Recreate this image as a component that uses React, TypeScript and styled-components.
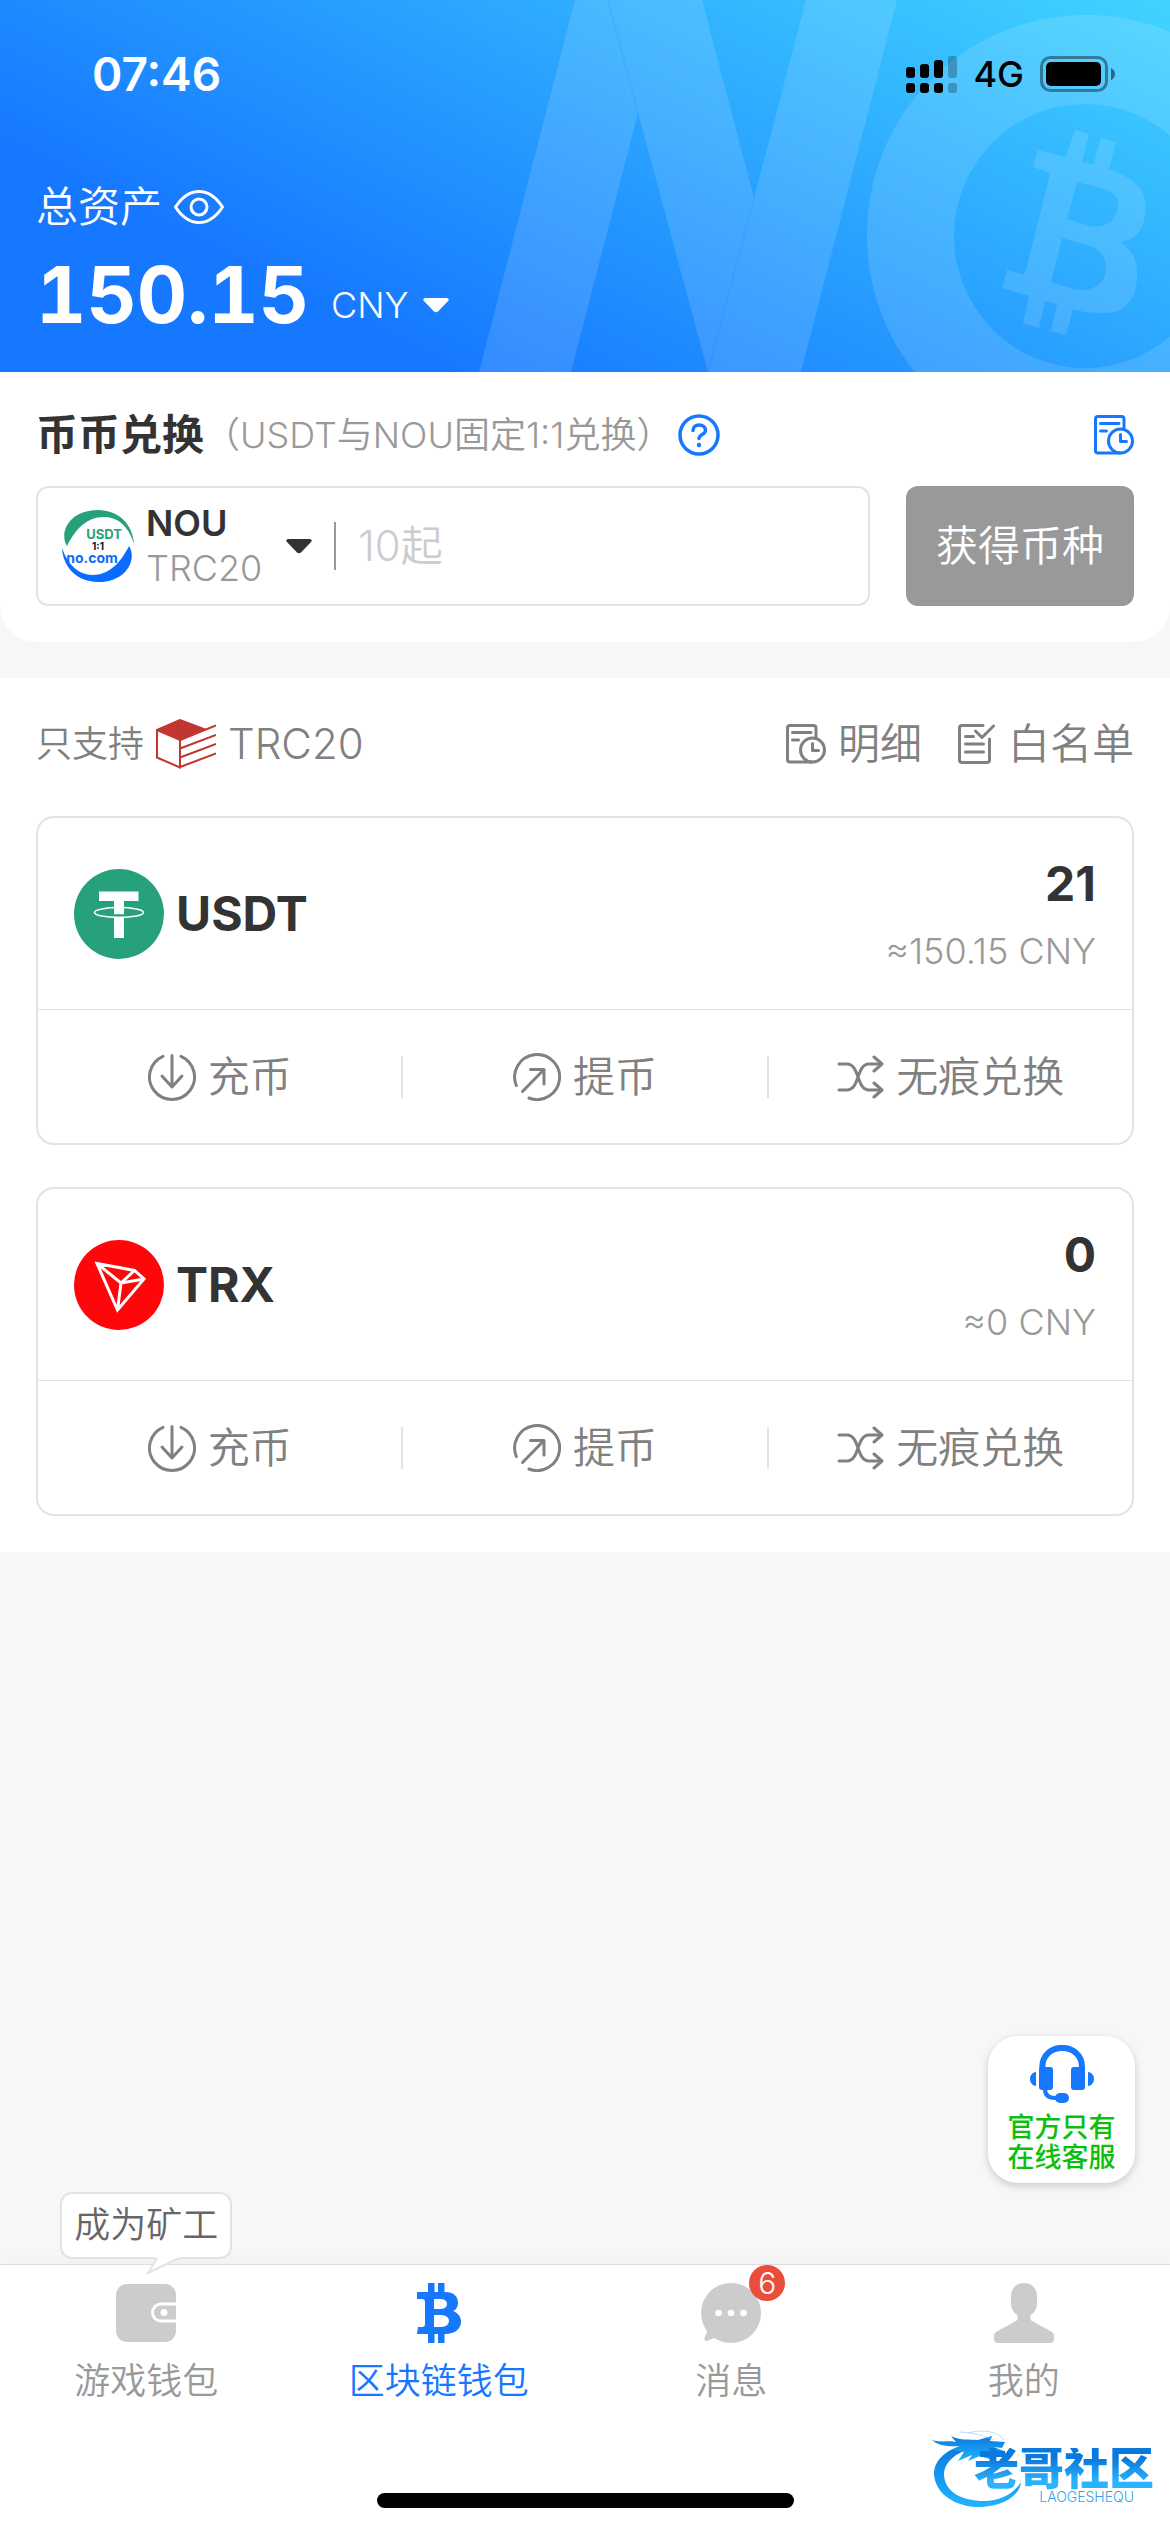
import React from "react";
import styled, { createGlobalStyle } from "styled-components";

const color = {
  primary: "#1677ff",
  ink: "#333333",
  text: "#808080",
  muted: "#999999",
  faint: "#cccccc",
  line: "#e3e3e3",
  page: "#f7f7f7",
};

const GlobalStyle = createGlobalStyle`
  * { box-sizing: border-box; }
  body {
    margin: 0;
    background: ${color.page};
    color: ${color.ink};
    font-family: Inter, "Noto Sans CJK SC", sans-serif;
    font-size: 42px;
    font-weight: 350;
    line-height: 60px;
  }
  button, input, select {
    margin: 0;
    padding: 0;
    border: 0;
    background: none;
    color: inherit;
    font: inherit;
  }
  h1, h2, p { margin: 0; font: inherit; }
  a { color: inherit; text-decoration: none; }
  svg { display: block; flex: none; }
`;

const Screen = styled.div`
  position: relative;
  display: flex;
  flex-direction: column;
  min-height: 100vh;
`;

/* ---------- header ---------- */

const Header = styled.header`
  position: relative;
  overflow: hidden;
  padding: 0 36px 27px;
  background: linear-gradient(27deg, #1677ff 23%, #40d4ff 100%);
  color: #fff;
`;

const HeaderArt = styled.svg`
  position: absolute;
  top: 0;
  right: 0;
`;

const HeaderBody = styled.div`
  position: relative;
`;

const StatusBar = styled.div`
  display: flex;
  align-items: center;
  justify-content: space-between;
  height: 148px;
  padding: 0 18px 0 56px;
`;

const Clock = styled.time`
  font-size: 46px;
  font-weight: 600;
`;

const StatusIcons = styled.div`
  display: flex;
  align-items: center;
  gap: 16px;
  color: #000;
  font-size: 36px;
  font-weight: 500;
`;

const AssetLabel = styled.div`
  display: flex;
  align-items: center;
  gap: 12px;
  margin-top: 29px;
`;

const IconButton = styled.button`
  display: flex;
  color: ${(p) => p.color ?? "inherit"};
`;

const AssetTotal = styled.div`
  display: flex;
  align-items: flex-end;
  gap: 22px;
  margin-top: 8px;
`;

const Amount = styled.h1`
  font-size: 78px;
  font-weight: 700;
  font-variant-numeric: tabular-nums;
  line-height: 100px;
`;

const CurrencyPicker = styled.label`
  display: flex;
  align-items: center;
  gap: 14px;
  padding-bottom: 16px;
  font-size: 36px;
  line-height: 48px;
`;

const CurrencySelect = styled.select`
  appearance: none;
`;

/* ---------- exchange ---------- */

const ExchangePanel = styled.section`
  padding: 36px;
  border-radius: 0 0 36px 36px;
  background: #fff;
`;

const Row = styled.div`
  display: flex;
  align-items: center;
`;

const ExchangeHead = styled(Row)`
  margin-bottom: 24px;
  line-height: 54px;
  height: 54px;
`;

const Title = styled.h2`
  font-weight: 700;
`;

const Note = styled.span`
  flex: 1;
  display: flex;
  align-items: center;
  gap: 6px;
  color: ${color.muted};
  font-size: 36px;
`;

const ExchangeForm = styled.form`
  display: flex;
  gap: 36px;
`;

const CoinField = styled.div`
  display: flex;
  align-items: center;
  flex: 1;
  min-width: 0;
  height: 120px;
  padding: 0 24px;
  border: 2px solid ${color.line};
  border-radius: 12px;
`;

const CoinPicker = styled.button`
  display: flex;
  align-items: center;
  gap: 12px;
  padding-right: 22px;
  text-align: left;
`;

const CoinNames = styled.span`
  display: flex;
  flex-direction: column;
  margin-right: 12px;
  color: ${color.muted};
  font-size: 36px;
  line-height: 45px;
`;

const CoinSymbol = styled.strong`
  color: ${color.ink};
  font-weight: 600;
`;

const AmountInput = styled.input`
  flex: 1;
  min-width: 0;
  height: 60px;
  padding-left: 22px;
  outline: 0;
  &::placeholder {
    color: ${color.faint};
    opacity: 1;
  }
`;

const Divider = styled.span<{ $tone: string; $height: number }>`
  flex: none;
  width: 2px;
  height: ${(p) => p.$height}px;
  background: ${(p) => p.$tone};
`;

const SubmitButton = styled.button`
  padding: 0 30px;
  border-radius: 12px;
  background: ${color.muted};
  color: #fff;
`;

/* ---------- assets ---------- */

const AssetPanel = styled.section`
  margin-top: 36px;
  padding: 36px;
  background: #fff;
`;

const AssetHead = styled(Row)`
  justify-content: space-between;
  margin-bottom: 42px;
  color: ${color.text};
`;

const Network = styled(Row)`
  gap: 12px;
`;

const SmallText = styled.span`
  font-size: 36px;
`;

const AssetLinks = styled.nav`
  display: flex;
  gap: 36px;
`;

const IconLink = styled.a`
  display: flex;
  align-items: center;
  gap: 12px;
`;

const CardList = styled.div`
  display: grid;
  gap: 42px;
`;

const Card = styled.article`
  border: 2px solid ${color.line};
  border-radius: 18px;
`;

const CardTop = styled(Row)`
  gap: 12px;
  height: 192px;
  padding: 0 36px;
  border-bottom: 1px solid ${color.line};
`;

const CardName = styled.h2`
  flex: 1;
  font-size: 48px;
  font-weight: 700;
`;

const Balance = styled.div`
  display: flex;
  flex-direction: column;
  gap: 12px;
  padding-top: 6px;
  text-align: right;
`;

const BalanceValue = styled.strong`
  font-size: 48px;
  font-weight: 700;
  line-height: 57px;
`;

const BalanceFiat = styled.span`
  color: ${color.muted};
  font-size: 36px;
  line-height: 54px;
`;

const Actions = styled.div`
  display: flex;
  align-items: center;
  height: 133px;
`;

const ActionButton = styled.button`
  display: flex;
  flex: 1 0 0;
  align-items: center;
  justify-content: center;
  gap: 12px;
  color: ${color.text};
`;

/* ---------- bottom ---------- */

const Service = styled.a`
  position: absolute;
  right: 35px;
  bottom: 349px;
  display: flex;
  flex-direction: column;
  align-items: center;
  gap: 10px;
  width: 147px;
  height: 147px;
  padding-top: 9px;
  border-radius: 30px;
  background: #fff;
  box-shadow: 0 3px 9px rgba(0, 0, 0, 0.18);
  color: ${color.primary};
  font-size: 27px;
  font-weight: 500;
  line-height: 30px;
  text-align: center;
`;

const ServiceText = styled.span`
  color: #0bbf0b;
`;

const Footer = styled.footer`
  position: relative;
  margin-top: auto;
  padding-bottom: 24px;
  border-top: 1px solid #dcdcdc;
  background: #fff;
  box-shadow: 0 -3px 18px rgba(0, 0, 0, 0.03);
`;

const TabBar = styled.nav`
  display: flex;
  padding-top: 18px;
`;

const Tab = styled.a<{ $active?: boolean }>`
  position: relative;
  display: flex;
  flex: 1 0 0;
  flex-direction: column;
  align-items: center;
  gap: 14px;
  color: ${(p) => (p.$active ? color.primary : color.muted)};
  font-size: 36px;
  line-height: 48px;
`;

const TabIcon = styled.span`
  position: relative;
  color: ${color.faint};
  ${Tab}[aria-current] & { color: ${color.primary}; }
`;

const Badge = styled.span`
  position: absolute;
  top: -18px;
  right: -24px;
  min-width: 36px;
  border-radius: 18px;
  background: #eb4d3d;
  color: #fff;
  font-size: 30px;
  line-height: 36px;
  text-align: center;
`;

const Bubble = styled.span`
  position: absolute;
  bottom: 146px;
  padding: 6px 12px;
  border: 2px solid ${color.line};
  border-radius: 12px;
  background: #fff;
  color: #666;
  line-height: 51px;
  white-space: nowrap;
`;

const BubbleTail = styled.svg`
  position: absolute;
  top: 100%;
  left: 50%;
  margin-top: -2px;
`;

const HomeIndicator = styled.div`
  width: 417px;
  max-width: 36%;
  height: 15px;
  margin: 88px auto 0;
  border-radius: 8px;
  background: #000;
`;

const Watermark = styled.div`
  position: absolute;
  right: 16px;
  bottom: 24px;
  width: 222px;
  height: 80px;
`;

const WatermarkArt = styled.svg`
  position: absolute;
  inset: 0;
`;

const WatermarkText = styled.div`
  position: relative;
  display: flex;
  flex-direction: column;
  align-items: flex-end;
  padding-top: 20px;
`;

const WatermarkName = styled.span`
  background: linear-gradient(#0a78dc 25%, #2ab4ff 80%);
  background-clip: text;
  -webkit-background-clip: text;
  color: transparent;
  font-size: 45px;
  font-weight: 900;
  line-height: 42px;
`;

const WatermarkLatin = styled.span`
  padding-right: 20px;
  color: #3aa0e8;
  font-size: 14px;
  line-height: 14px;
`;

/* ---------- icons ---------- */

const stroke = {
  fill: "none",
  stroke: "currentColor",
  strokeWidth: 3,
  strokeLinecap: "round" as const,
  strokeLinejoin: "round" as const,
};

const Caret = () => (
  <svg width="26" height="15" viewBox="0 0 26 15" fill="currentColor">
    <path d="M2 0H24Q27 1 25 3L15 13.500Q13 15 11 13.500L1 3Q-1 1 2 0Z" />
  </svg>
);

const EyeIcon = () => (
  <svg width="50" height="34" viewBox="0 0 50 34" {...stroke}>
    <path d="M1.500 17C8 7 16 1.500 25 1.500S42 7 48.500 17C42 27 34 32.500 25 32.500S8 27 1.500 17Z" />
    <circle cx="25" cy="17" r="8" />
  </svg>
);

const SignalIcon = () => (
  <svg width="51" height="37" viewBox="0 0 51 37">
    <rect x="0" y="11" width="9" height="11" rx="3" />
    <rect x="14" y="8" width="9" height="14" rx="3" />
    <rect x="28" y="4" width="9" height="18" rx="3" />
    <rect x="42" y="0" width="9" height="22" rx="3" opacity=".25" />
    <rect x="0" y="27" width="9" height="10" rx="3" />
    <rect x="14" y="27" width="9" height="10" rx="3" />
    <rect x="28" y="27" width="9" height="10" rx="3" />
    <rect x="42" y="27" width="9" height="10" rx="3" opacity=".25" />
  </svg>
);

const BatteryIcon = () => (
  <svg width="76" height="36" viewBox="0 0 76 36">
    <rect x="1.500" y="1.500" width="65" height="33" rx="9" fill="none" stroke="#000" strokeWidth="3" opacity=".4" />
    <rect x="6" y="6" width="55" height="24" rx="5" />
    <path d="M71 12Q75 14 75 18T71 24Z" opacity=".5" />
  </svg>
);

const HelpIcon = () => (
  <svg width="42" height="42" viewBox="0 0 42 42" {...stroke} strokeWidth="3.500">
    <circle cx="21" cy="21" r="19" />
    <path d="M15 16.500C15 13 18 11 21 11C25 11 27.500 13.500 27.500 16.500C27.500 20.500 21 20.500 21 24.500" strokeWidth="3.500" />
    <circle cx="21" cy="31" r="2.200" fill="currentColor" stroke="none" />
  </svg>
);

const RecordIcon = () => (
  <svg width="40" height="40" viewBox="0 0 40 40" {...stroke}>
    <path d="M30 13V4Q30 1.500 27.500 1.500H4Q1.500 1.500 1.500 4V35.500Q1.500 38 4 38H26" />
    <path d="M6.500 8.500H25M6.500 16H12.500" />
    <circle cx="26.500" cy="26" r="12" />
    <path d="M26.500 19.500V26.500H32.500" />
  </svg>
);

const WhitelistIcon = () => (
  <svg width="38" height="40" viewBox="0 0 38 40" {...stroke}>
    <path d="M25 1.500H4Q1.500 1.500 1.500 4V36Q1.500 38.500 4 38.500H29Q31.500 38.500 31.500 36V15" />
    <path d="M17.500 7L24 13.500L35.500 2M7.500 12.500H15.500M7.500 20H25.500M7.500 28H25.500" />
  </svg>
);

const DepositIcon = () => (
  <svg width="48" height="48" viewBox="0 0 48 48" {...stroke}>
    <path d="M15 3.300A22.500 22.500 0 1 0 33 3.300" />
    <path d="M24 2.500V34M14 23L24 34L34 23" />
  </svg>
);

const WithdrawIcon = () => (
  <svg width="48" height="48" viewBox="0 0 48 48" {...stroke}>
    <path d="M3.300 32.500A22.500 22.500 0 1 1 16 45" />
    <path d="M9.500 38.500L31 16.500M17.500 16.500H31V31" />
  </svg>
);

const ShuffleIcon = () => (
  <svg width="48" height="44" viewBox="0 0 48 44" {...stroke}>
    <path d="M3 9H11C24 9 20 35 33 35H45M3 35H11C24 35 20 9 33 9H45" />
    <path d="M38 2L46 9L38 16M38 28L46 35L38 42" />
  </svg>
);

const NouLogo = () => (
  <svg width="72" height="72" viewBox="0 0 72 72" fontFamily="Inter, sans-serif" fontWeight="700" textAnchor="middle">
    <path d="M5 36C-3 24 6 0 36 0C56 0 71 14 72 34C66 14 54 7 42 7C24 7 13 20 5 36Z" fill="#26a17b" />
    <path d="M67 36C75 48 66 72 36 72C16 72 1 58 0 38C6 56 18 65 30 65C48 65 59 52 67 36Z" fill="#0a6cff" />
    <text x="42" y="29" fontSize="13" fill="#26a17b">USDT</text>
    <text x="36" y="40" fontSize="10" fill="#111">1:1</text>
    <text x="30" y="53" fontSize="14" fill="#0a6cff">no.com</text>
  </svg>
);

const TronCube = () => (
  <svg width="60" height="50" viewBox="0 0 60 50" fill="none" stroke="#c23631" strokeWidth="2">
    <path d="M1 11L24 1L48 10L24 21Z" fill="#c23631" />
    <path d="M1 11V38.500L24 48.500V21M24 21L60 6.500M24 29.500L60 16M24 38.500L60 25M24 48L60 34.500" />
  </svg>
);

const TetherLogo = () => (
  <svg width="90" height="90" viewBox="0 0 90 90">
    <circle cx="45" cy="45" r="45" fill="#26a17b" />
    <path d="M25 22.500H64.500V32H50V69H40V32H25Z" fill="#fff" />
    <path d="M40 46.500H50" stroke="#26a17b" strokeWidth="2.500" />
    <ellipse cx="45" cy="43.500" rx="24.500" ry="5" fill="none" stroke="#fff" strokeWidth="1.500" />
  </svg>
);

const TronLogo = () => (
  <svg width="90" height="90" viewBox="0 0 90 90">
    <circle cx="45" cy="45" r="45" fill="#ff060a" />
    <path
      d="M23 23.500L60.500 30.500L70 39L43.500 70ZM23 23.500L47 43L60.500 30.500M47 43L70 39M47 43L43.500 70"
      fill="none"
      stroke="#fff"
      strokeWidth="3"
    />
  </svg>
);

const HeadsetIcon = () => (
  <svg width="64" height="58" viewBox="0 0 64 58" fill="currentColor">
    <path d="M12.300 30V22C12.300 -3.500 52 -3.500 52 22V30" fill="none" stroke="currentColor" strokeWidth="6" />
    <rect x="9" y="22" width="14" height="23" rx="3" />
    <rect x="41" y="22" width="14" height="23" rx="3" />
    <path d="M6 27V41C-2 40 -2 28 6 27ZM58 27V41C66 40 66 28 58 27Z" />
    <path d="M15 44Q15 53 25 53H28" fill="none" stroke="currentColor" strokeWidth="4" />
    <rect x="25" y="48" width="14" height="10" rx="5" />
  </svg>
);

const WalletIcon = () => (
  <svg width="60" height="60" viewBox="0 0 60 60" fill="currentColor">
    <rect y="1" width="60" height="58" rx="11" />
    <path d="M61 21H45A8.500 8.500 0 0 0 45 38H61" fill="none" stroke="#fff" strokeWidth="3" />
    <circle cx="48" cy="29.500" r="3.500" fill="#fff" />
  </svg>
);

const BitcoinIcon = () => (
  <svg width="44" height="60" viewBox="0 0 44 60" fill="currentColor" fillRule="evenodd">
    <path d="M0 9H28C37 9 41 14 41 19.500C41 24 39 27 36 28C41 30 44 33.500 44 38.500C44 46 38 51 28 51H0L1 44H5Q8 44 8 41V19Q8 16 5 16H0ZM17 16V26H24Q30 25.500 30 21T24 16ZM17 32V44H24Q32 43.500 32 38T24 32Z" />
    <path d="M11 0H17.500V10H11ZM21 0H27.500V10H21ZM11 50H17.500V60H11ZM21 50H27.500V60H21Z" />
  </svg>
);

const MessageIcon = () => (
  <svg width="60" height="60" viewBox="0 0 60 60" fill="currentColor">
    <circle cx="30" cy="30" r="30" />
    <path d="M6 46Q7 49 4 53Q2 58 6 58L15 54Z" />
    <g fill="#fff">
      <circle cx="17.500" cy="30" r="3.300" />
      <circle cx="30" cy="30" r="3.300" />
      <circle cx="42.500" cy="30" r="3.300" />
    </g>
  </svg>
);

const PersonIcon = () => (
  <svg width="60" height="60" viewBox="0 0 60 60" fill="currentColor">
    <path d="M30 0C38 0 43 6 43 13V20C43 26 40 30 36.500 32V37L58 49Q60 50 60 53V56Q60 60 56 60H4Q0 60 0 56V53Q0 50 2 49L23.500 37V32C20 30 17 26 17 20V13C17 6 22 0 30 0Z" />
  </svg>
);

const Dragon = () => (
  <WatermarkArt width="222" height="80" viewBox="0 0 222 80">
    <defs>
      <linearGradient id="dragon" x1="0" y1="0" x2="0" y2="1">
        <stop offset="0" stopColor="#0a78dc" />
        <stop offset="1" stopColor="#22b4ff" />
      </linearGradient>
    </defs>
    <g fill="url(#dragon)">
      <path d="M40 15C18 19 2 30 2 46C3 66 24 80 50 79C72 78 88 67 89 54C82 66 68 73 52 73C30 73 13 64 12 47C12 34 24 24 42 20Z" />
      <path d="M0 12C10 15 18 12 24 14L19 8C28 13 38 11 46 12L60 8L58 13L73 14L70 20L62 19L72 23L68 29L56 26L60 32L48 28L36 33L40 27L26 33L32 24L20 22L28 18C18 19 6 18 0 12Z" />
    </g>
    <path d="M36 5C50 1 66 3 72 12M28 4C42 5 54 8 62 12" fill="none" stroke="#8ccbf5" strokeWidth="1" opacity=".6" />
  </WatermarkArt>
);

const HeaderPattern = () => (
  <HeaderArt width="700" height="372" viewBox="470 0 700 372" fill="#fff" aria-hidden="true">
    <g fillOpacity=".13" fillRule="evenodd">
      <path d="M575 0H702L754 198L806 0H897L801 372H708L638 113L571 372H479Z" />
      <path d="M867 235A219 220 0 1 1 1305 235A219 220 0 1 1 867 235ZM954 236A131 132 0 1 0 1216 236A131 132 0 1 0 954 236Z" />
      <path d="M1075 130L1089 134L1082 162L1093 165L1101 138L1116 142L1109 169C1134 178 1146 190 1146 207C1145 228 1137 240 1120 242C1133 250 1138 262 1137 277C1136 303 1122 314 1102 313C1092 313 1082 312 1073 309L1066 335L1051 331L1057 304L1045 301L1039 328L1023 323L1029 296L1002 288L1007 270L1021 274Q1025 275 1026 270L1049 178Q1051 173 1047 172L1033 167L1038 150L1066 157ZM1077 182L1067 219L1090 226C1105 229 1118 220 1118 205C1118 196 1111 190 1101 188ZM1062 238L1051 282L1073 289C1092 293 1106 284 1106 268C1106 256 1098 248 1087 245Z" />
    </g>
    <path d="M608 0L638 113M754 198L708 372" stroke="#1677ff" strokeWidth="2" opacity=".12" />
  </HeaderArt>
);

/* ---------- page ---------- */

const assets = [
  { name: "USDT", logo: <TetherLogo />, balance: "21", fiat: "≈150.15 CNY" },
  { name: "TRX", logo: <TronLogo />, balance: "0", fiat: "≈0 CNY" },
];

const AssetCard = ({ name, logo, balance, fiat }: (typeof assets)[number]) => (
  <Card>
    <CardTop>
      {logo}
      <CardName>{name}</CardName>
      <Balance>
        <BalanceValue>{balance}</BalanceValue>
        <BalanceFiat>{fiat}</BalanceFiat>
      </Balance>
    </CardTop>
    <Actions>
      <ActionButton type="button"><DepositIcon />充币</ActionButton>
      <Divider $tone={color.line} $height={42} />
      <ActionButton type="button"><WithdrawIcon />提币</ActionButton>
      <Divider $tone={color.line} $height={42} />
      <ActionButton type="button"><ShuffleIcon />无痕兑换</ActionButton>
    </Actions>
  </Card>
);

export default function App() {
  return (
    <Screen>
      <GlobalStyle />
      <Header>
        <HeaderPattern />
        <HeaderBody>
          <StatusBar>
            <Clock>07:46</Clock>
            <StatusIcons>
              <SignalIcon />
              4G
              <BatteryIcon />
            </StatusIcons>
          </StatusBar>
          <AssetLabel>
            总资产
            <IconButton type="button"><EyeIcon /></IconButton>
          </AssetLabel>
          <AssetTotal>
            <Amount>150.15</Amount>
            <CurrencyPicker>
              <CurrencySelect>
                <option>CNY</option>
              </CurrencySelect>
              <Caret />
            </CurrencyPicker>
          </AssetTotal>
        </HeaderBody>
      </Header>

      <ExchangePanel>
        <ExchangeHead>
          <Title>币币兑换</Title>
          <Note>
            （USDT与NOU固定1:1兑换）
            <IconButton type="button" color={color.primary}><HelpIcon /></IconButton>
          </Note>
          <IconButton type="button" color={color.primary}><RecordIcon /></IconButton>
        </ExchangeHead>
        <ExchangeForm onSubmit={(e) => e.preventDefault()}>
          <CoinField>
            <CoinPicker type="button">
              <NouLogo />
              <CoinNames>
                <CoinSymbol>NOU</CoinSymbol>
                TRC20
              </CoinNames>
              <Caret />
            </CoinPicker>
            <Divider $tone={color.muted} $height={48} />
            <AmountInput placeholder="10起" inputMode="decimal" />
          </CoinField>
          <SubmitButton>获得币种</SubmitButton>
        </ExchangeForm>
      </ExchangePanel>

      <AssetPanel>
        <AssetHead>
          <Network>
            <SmallText>只支持</SmallText>
            <TronCube />
            TRC20
          </Network>
          <AssetLinks>
            <IconLink href="#records"><RecordIcon />明细</IconLink>
            <IconLink href="#whitelist"><WhitelistIcon />白名单</IconLink>
          </AssetLinks>
        </AssetHead>
        <CardList>
          {assets.map((asset) => (
            <AssetCard key={asset.name} {...asset} />
          ))}
        </CardList>
      </AssetPanel>

      <Footer>
        <TabBar>
          <Tab href="#game">
            <Bubble>
              成为矿工
              <BubbleTail width="42" height="20" viewBox="0 0 42 20">
                <path d="M11 0L2 18L30 4L40 0Z" fill="#fff" />
                <path d="M11 3L2 18L31 4L38 3" fill="none" stroke={color.line} strokeWidth="2" />
              </BubbleTail>
            </Bubble>
            <TabIcon><WalletIcon /></TabIcon>
            游戏钱包
          </Tab>
          <Tab href="#chain" $active aria-current="page">
            <TabIcon><BitcoinIcon /></TabIcon>
            区块链钱包
          </Tab>
          <Tab href="#messages">
            <TabIcon>
              <MessageIcon />
              <Badge>6</Badge>
            </TabIcon>
            消息
          </Tab>
          <Tab href="#me">
            <TabIcon><PersonIcon /></TabIcon>
            我的
          </Tab>
        </TabBar>
        <HomeIndicator />
        <Watermark>
          <Dragon />
          <WatermarkText>
            <WatermarkName>老哥社区</WatermarkName>
            <WatermarkLatin>LAOGESHEQU</WatermarkLatin>
          </WatermarkText>
        </Watermark>
      </Footer>

      <Service href="#service">
        <HeadsetIcon />
        <ServiceText>官方只有<br />在线客服</ServiceText>
      </Service>
    </Screen>
  );
}
